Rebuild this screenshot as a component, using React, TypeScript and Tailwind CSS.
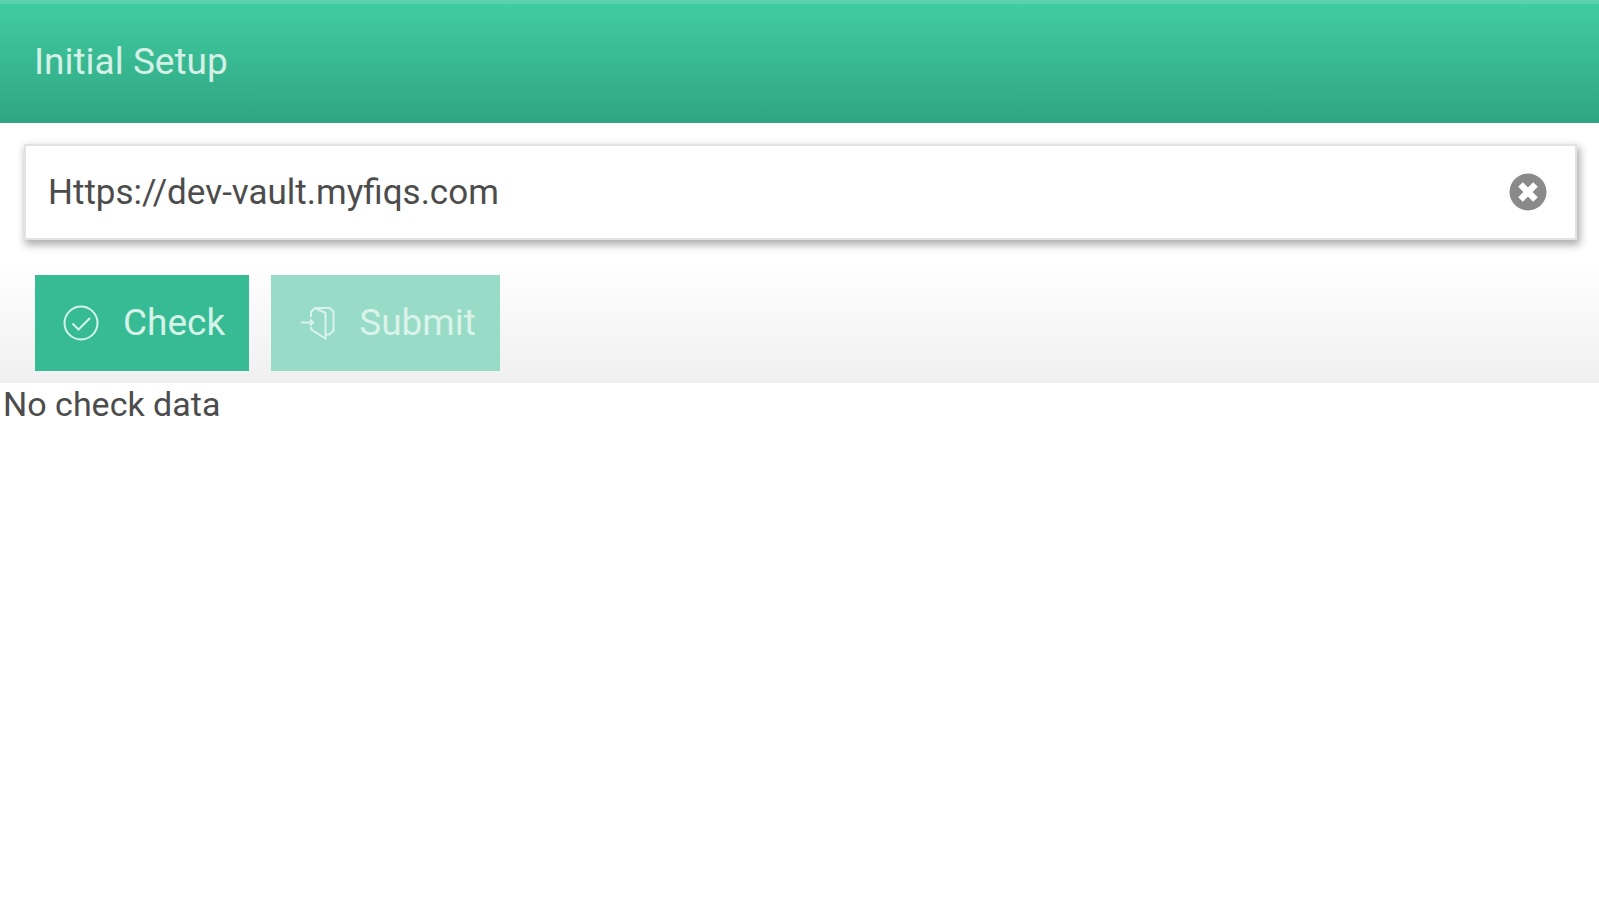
import { useState } from "react";

const CheckIcon = () => (
    <svg aria-hidden="true" viewBox="0 0 36 36" className="size-9 shrink-0" fill="none" stroke="currentColor" strokeWidth="2">
        <circle cx="18" cy="18" r="16.5" />
        <path d="M9.5 18.5l6 6L27 13" />
    </svg>
);

const SubmitIcon = () => (
    <svg aria-hidden="true" viewBox="0 0 36 36" className="size-9 shrink-0" fill="none" stroke="currentColor" strokeWidth="2">
        <path d="M2 17.500h12M11 14.500l3 3-3 3" />
        <path d="M12 12V7l4-4h14.500l4 3.500v19l-4 4h-4" />
        <path d="M17 3.500l9.500 4.500v25.500L13 25l-1.500-3" />
    </svg>
);

const App = () => {
    const [url, setUrl] = useState("Https://dev-vault.myfiqs.com");

    return (
        <div className="font-[Roboto,sans-serif] text-[#4c4c4c]">
            <header className="border-t-4 border-[#5bd2ae] bg-linear-to-b from-[#41cba1] to-[#2fa681] px-[34px] pt-[34px] pb-[38px]">
                <h1 className="text-[37px] leading-[47px] text-[#d5f1e7]">Initial Setup</h1>
            </header>
            <form onSubmit={(e) => e.preventDefault()}>
                <div className="pt-[21px] pr-[22px] pb-[21px] pl-6">
                    <div className="flex items-center border-2 border-[#e2e2e2] bg-white pr-7 pl-[22px] shadow-[2px_4px_8px_1px_rgba(0,0,0,0.32)]">
                        <input
                            type="text"
                            aria-label="Vault URL"
                            value={url}
                            onChange={(e) => setUrl(e.target.value)}
                            className="h-[92px] min-w-0 flex-1 bg-transparent text-[35px] outline-none"
                        />
                        <button type="button" aria-label="Clear" onClick={() => setUrl("")} className="shrink-0">
                            <svg aria-hidden="true" viewBox="0 0 38 38" className="size-[38px]">
                                <circle cx="19" cy="19" r="18.5" fill="#8a8a8a" />
                                <path d="M11.500 11.500l15 15M26.500 11.500l-15 15" stroke="#fff" strokeWidth="6.500" />
                            </svg>
                        </button>
                    </div>
                </div>
                <div className="flex gap-[22px] bg-linear-to-b from-white to-[#f0f0f0] px-[35px] pt-[14px] pb-3">
                    <button type="submit" className="flex h-24 items-center gap-6 bg-[#36bb94] pr-6 pl-7 text-[37px] text-[#d5f3e8]">
                        <CheckIcon />
                        Check
                    </button>
                    <button type="button" disabled className="flex h-24 items-center gap-6 bg-[#98dbc6] pr-6 pl-7 text-[37px] text-[#daf3eb]">
                        <SubmitIcon />
                        Submit
                    </button>
                </div>
            </form>
            <p className="px-[3px] text-[34px] leading-[42px]">No check data</p>
        </div>
    );
};

export default App;
